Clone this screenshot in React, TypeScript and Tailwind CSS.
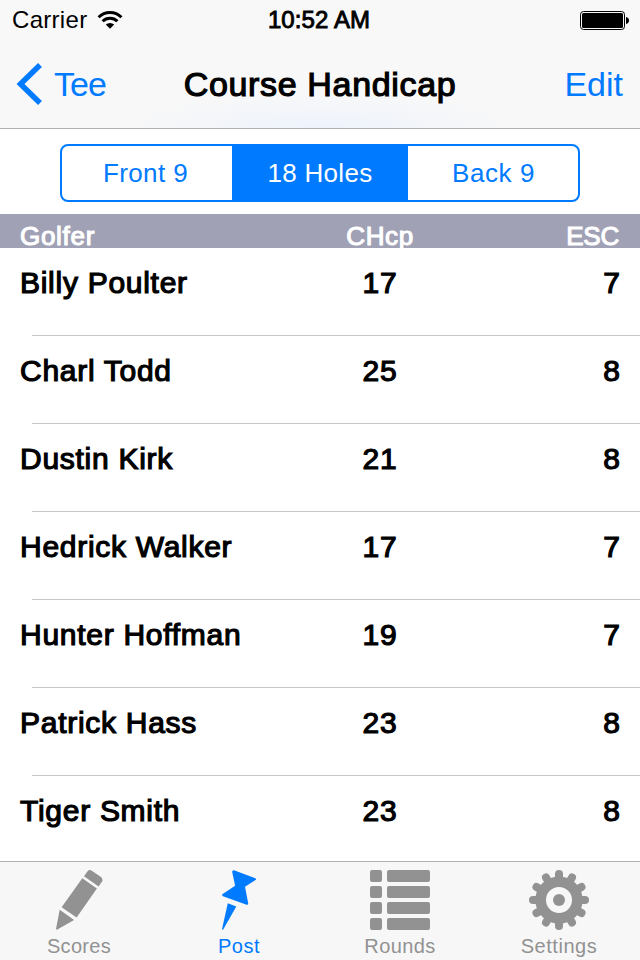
import React from 'react';

interface Golfer {
  name: string;
  chcp: number;
  esc: number;
}

const golfers: Golfer[] = [
  { name: 'Billy Poulter', chcp: 17, esc: 7 },
  { name: 'Charl Todd', chcp: 25, esc: 8 },
  { name: 'Dustin Kirk', chcp: 21, esc: 8 },
  { name: 'Hedrick Walker', chcp: 17, esc: 7 },
  { name: 'Hunter Hoffman', chcp: 19, esc: 7 },
  { name: 'Patrick Hass', chcp: 23, esc: 8 },
  { name: 'Tiger Smith', chcp: 23, esc: 8 },
];

const WifiIcon = () => (
  <svg width="26" height="18" viewBox="0 0 26 18" fill="none" stroke="#000" strokeWidth="3">
    <path d="M1.6 6.2a16.2 16.2 0 0 1 22.8 0" />
    <path d="M5.6 10.3a10.5 10.5 0 0 1 14.8 0" />
    <path d="M13 17.8l-4.2-4.2a6 6 0 0 1 8.4 0z" fill="#000" stroke="none" />
  </svg>
);

const BatteryIcon = () => (
  <svg width="50" height="20" viewBox="0 0 50 20">
    <rect x="0.5" y="1.5" width="44" height="18" rx="3" fill="none" stroke="#000" />
    <rect x="2" y="3" width="41" height="15" rx="1.5" fill="#000" />
    <path d="M46 7c2 .4 3 1.7 3 3.5s-1 3.1-3 3.5z" fill="#000" />
  </svg>
);

const PencilIcon = () => (
  <svg width="60" height="60" viewBox="-0.8 0 60 60" fill="currentColor">
    <path d="M34.200 6.200l3.400-4.800q1.600-2 4-1l9.600 6.700q2 1.600 1.200 4.200l-3.600 5.200z" />
    <path d="M32.500 8.200l14.600 10.300-20.300 29-15-10.200z" />
    <path d="M9.900 39.800l14.400 10.300-16.800 9.400q-1.300.5-1.200-1z" />
  </svg>
);

const PinIcon = () => (
  <svg width="38" height="60" viewBox="0 0 38 60" fill="currentColor">
    <path d="M14 .2l21.300 8.100q1.400.7.200 1.800L25 16.800l3.200 16.400q.1 1.900-1.600 1.600L3 26.200q-1.800-1-.3-2.200l12.400-8.200L12.200 2q-.1-2 1.800-1.800z" />
    <path d="M7.800 33.300l8.500 3.100L3.200 59.500q-1.100 1-1.100-.7z" />
  </svg>
);

const ListIcon = () => (
  <svg width="60" height="60" viewBox="0 0 60 60" fill="currentColor">
    {[0, 16, 32, 48].map((y) => (
      <g key={y}>
        <rect x="0" y={y} width="12" height="12" rx="2" />
        <rect x="17" y={y} width="43" height="12" rx="2" />
      </g>
    ))}
  </svg>
);

const GearIcon = () => (
  <svg width="60" height="60" viewBox="0 0 60 60" stroke="currentColor" fill="none">
    <circle cx="30" cy="30" r="18.3" strokeWidth="10.6" />
    {[0, 30, 60, 90, 120, 150, 180, 210, 240, 270, 300, 330].map((angle) => (
      <path key={angle} d="M30 10V4" strokeWidth="8" strokeLinecap="round" transform={`rotate(${angle} 30 30)`} />
    ))}
    <circle cx="30" cy="30" r="6" fill="currentColor" stroke="none" />
  </svg>
);

const tabs = [
  { id: 'scores', label: 'Scores', icon: PencilIcon, active: false, spacing: 'pr-[2px] tracking-[0.3px]' },
  { id: 'post', label: 'Post', icon: PinIcon, active: true, spacing: 'pr-[2px] tracking-[0.5px]' },
  { id: 'rounds', label: 'Rounds', icon: ListIcon, active: false, spacing: 'tracking-[0.4px]' },
  { id: 'settings', label: 'Settings', icon: GearIcon, active: false, spacing: 'pr-[2px] tracking-[0.55px]' },
];

const App: React.FC = () => {
  return (
    <div className="flex h-[960px] w-[640px] flex-col overflow-hidden bg-white font-['Liberation_Sans',Arial,sans-serif] text-black">
      <header className="flex h-[129px] shrink-0 flex-col border-b border-[#b2b2b2] bg-[#f8f8f8] bg-[radial-gradient(ellipse_200px_36px_at_50%_100%,#eef3fc,#f8f8f8)]">
        <div className="grid h-10 grid-cols-[1fr_auto_1fr] items-center pl-3 pr-[10px] text-2xl leading-10">
          <div className="flex items-center gap-[10px] tracking-[0.3px]">
            <span>Carrier</span>
            <WifiIcon />
          </div>
          <span className="pr-1 text-center tracking-[0.1px] [-webkit-text-stroke:0.9px_black]">10:52 AM</span>
          <div className="flex justify-end">
            <BatteryIcon />
          </div>
        </div>
        <div className="grid h-[88px] grid-cols-[1fr_auto_1fr] items-center px-4 text-[34px] leading-[88px]">
          <button className="flex items-center gap-[11px] text-left tracking-[-1px] text-[#007aff]">
            <svg width="27" height="44" viewBox="0 0 27 44" fill="none" stroke="currentColor" strokeWidth="5.5">
              <path d="M24 3L4.500 22 24 41" />
            </svg>
            <span>Tee</span>
          </button>
          <h1 className="tracking-[0.66px] [-webkit-text-stroke:1.2px_black]">Course Handicap</h1>
          <button className="pr-px text-right text-[#007aff]">Edit</button>
        </div>
      </header>

      <div className="flex h-[85px] shrink-0 items-start justify-center pt-[15px]">
        <div className="flex h-[58px] w-[520px] overflow-hidden rounded-lg border-2 border-[#007aff] text-[26px] text-[#007aff]">
          <button className="w-[170px] pr-[3px] tracking-[0.4px]">Front 9</button>
          <button className="w-[176px] bg-[#007aff] tracking-[0.3px] text-white">18 Holes</button>
          <button className="w-[170px] pl-px tracking-[0.6px]">Back 9</button>
        </div>
      </div>

      <div className="grid h-[34px] shrink-0 grid-cols-[260px_200px_140px] overflow-hidden bg-[#a0a1b5] px-5 pt-[10px] text-[26px] leading-6 text-white [-webkit-text-stroke:1.1px_white]">
        <span className="tracking-[0.7px]">Golfer</span>
        <span className="text-center tracking-[0.6px]">CHcp</span>
        <span className="pr-px text-right tracking-[-0.2px]">ESC</span>
      </div>

      <main className="min-h-0 flex-1 overflow-hidden">
        {golfers.map((golfer) => (
          <div key={golfer.name} className="h-[88px]">
            <div className="grid h-[87px] grid-cols-[260px_200px_140px] px-5 text-[30px] leading-[70px] tracking-[0.72px] [-webkit-text-stroke:1.2px_black]">
              <span>{golfer.name}</span>
              <span className="text-center">{golfer.chcp}</span>
              <span className="text-right tracking-normal">{golfer.esc}</span>
            </div>
            <div className="ml-8 h-px bg-[#c8c7cc]" />
          </div>
        ))}
      </main>

      <nav className="grid h-[99px] shrink-0 grid-cols-4 border-t border-[#b2b2b2] bg-[#f7f7f7]">
        {tabs.map((tab) => (
          <button key={tab.id} className={`flex flex-col items-center pt-2 ${tab.spacing} ${tab.active ? 'text-[#007aff]' : 'text-[#929292]'}`}>
            <tab.icon />
            <span className="mt-1 text-xl leading-6">{tab.label}</span>
          </button>
        ))}
      </nav>
    </div>
  );
};

export default App;
